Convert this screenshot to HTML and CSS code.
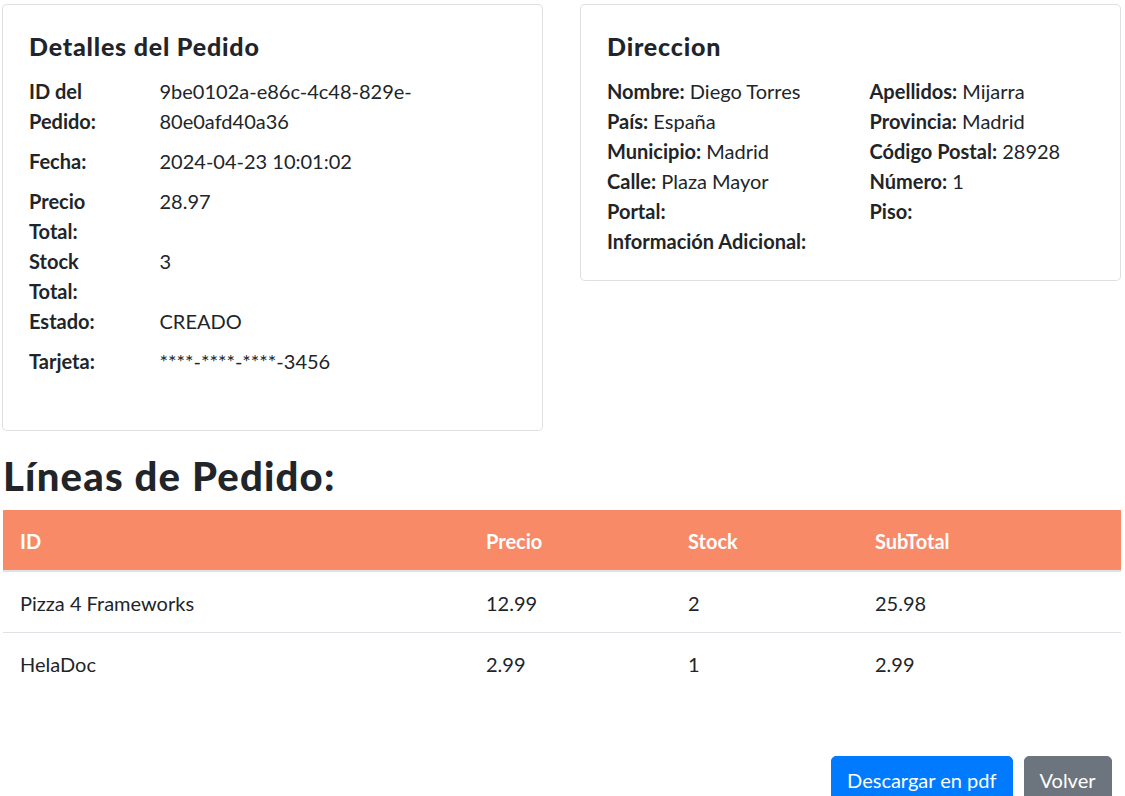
FILE: index.html
```html
<!DOCTYPE html>
<html lang="es">
<head>
<meta charset="utf-8">
<title>Detalles del Pedido</title>
<link rel="stylesheet" href="styles.css">
</head>
<body>
<main class="page">
  <div class="cards">
    <section class="card">
      <h5 class="card-title">Detalles del Pedido</h5>
      <dl class="details">
        <dt>ID del Pedido:</dt><dd>9be0102a-e86c-4c48-829e-80e0afd40a36</dd>
        <dt>Fecha:</dt><dd>2024-04-23 10:01:02</dd>
        <dt>Precio Total:</dt><dd>28.97</dd>
        <dt>Stock Total:</dt><dd>3</dd>
        <dt>Estado:</dt><dd>CREADO</dd>
        <dt>Tarjeta:</dt><dd>****-****-****-3456</dd>
      </dl>
    </section>
    <section class="card">
      <h5 class="card-title">Direccion</h5>
      <div class="address">
        <p><strong>Nombre:</strong> Diego Torres</p>
        <p><strong>Apellidos:</strong> Mijarra</p>
        <p><strong>País:</strong> España</p>
        <p><strong>Provincia:</strong> Madrid</p>
        <p><strong>Municipio:</strong> Madrid</p>
        <p><strong>Código Postal:</strong> 28928</p>
        <p><strong>Calle:</strong> Plaza Mayor</p>
        <p><strong>Número:</strong> 1</p>
        <p><strong>Portal:</strong> </p>
        <p><strong>Piso:</strong> </p>
        <p><strong>Información Adicional:</strong> </p>
      </div>
    </section>
  </div>

  <h2 class="section-title">Líneas de Pedido:</h2>
  <table class="lines">
    <thead>
      <tr><th class="c-id">ID</th><th class="c-price">Precio</th><th class="c-stock">Stock</th><th>SubTotal</th></tr>
    </thead>
    <tbody>
      <tr><td>Pizza 4 Frameworks</td><td>12.99</td><td>2</td><td>25.98</td></tr>
      <tr><td>HelaDoc</td><td>2.99</td><td>1</td><td>2.99</td></tr>
    </tbody>
  </table>

  <div class="actions">
    <button class="btn btn-primary" type="button">Descargar en pdf</button>
    <button class="btn btn-secondary" type="button">Volver</button>
  </div>
</main>
</body>
</html>
```

FILE: styles.css
```css
* { box-sizing: border-box; }
html, body { margin: 0; padding: 0; background: #fff; }
body {
  font-family: "Lato", "Open Sans", sans-serif;
  font-size: 20px;
  line-height: 30px;
  color: #212529;
  overflow: hidden;
}
.page {
  width: 1118.5px;
  margin-left: 2px;
  padding-top: 4px;
}
.cards {
  display: grid;
  grid-template-columns: 1fr 1fr;
  column-gap: 37.5px;
  align-items: start;
  margin-bottom: 21px;
}
.card {
  border: 1px solid rgba(0,0,0,.125);
  border-radius: 5px;
  padding: 26px 25px 24px 26px;
  background: #fff;
}
.card-title {
  margin: 0 0 15px;
  font-size: 25px;
  line-height: 30px;
  font-weight: 900;
  letter-spacing: 0.8px;
}
.details {
  display: grid;
  grid-template-columns: 93px 1fr;
  column-gap: 37.5px;
  margin: 0 0 20px;
}
.details dt { font-weight: 700; margin: 0; }
.details dd { margin: 0 0 10px; }
.address {
  display: grid;
  grid-template-columns: 1fr 1fr;
  column-gap: 37.5px;
}
.address p { margin: 0; }
.address strong { font-weight: 700; }
.section-title {
  margin: 0 0 10px 1px;
  font-size: 40px;
  line-height: 48px;
  font-weight: 900;
  letter-spacing: 1.2px;
}
.lines {
  width: calc(100% - 1px);
  margin-left: 1px;
  border-collapse: collapse;
  margin-bottom: 63px;
}
.lines th, .lines td {
  padding: 16px 17px 14px;
  text-align: left;
  vertical-align: top;
}
.lines th {
  background: #f88a68;
  color: #fff;
  font-weight: 700;
  border-bottom: 2px solid #dee2e6;
}
.lines td { border-top: 1px solid #dee2e6; }
.lines tbody tr:first-child td { border-top: 0; }
.c-id { width: 466px; }
.c-price { width: 202px; }
.c-stock { width: 187px; }
.actions {
  display: flex;
  justify-content: flex-end;
  gap: 11px;
  padding-right: 9px;
}
.btn {
  font-family: inherit;
  font-size: 20px;
  line-height: 30px;
  padding: 8px 15px 7px;
  border: 1px solid transparent;
  border-radius: 5px;
  color: #fff;
  cursor: pointer;
}
.btn-primary { background: #007bff; border-color: #007bff; }
.btn-secondary { background: #6c757d; border-color: #6c757d; }
```
